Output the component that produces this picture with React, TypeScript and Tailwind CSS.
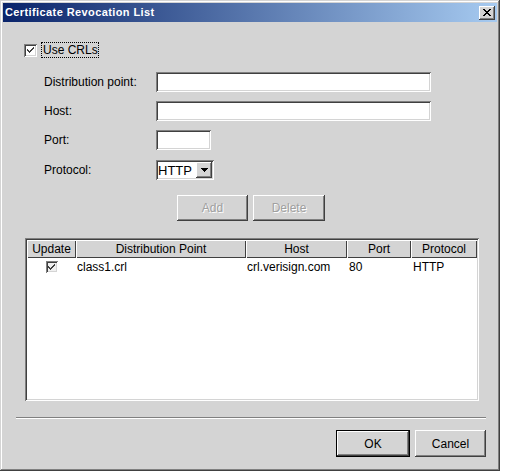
import React from 'react';

const raised = 'shadow-[inset_-1px_-1px_0_#404040,inset_1px_1px_0_#ffffff,inset_-2px_-2px_0_#808080]';
const sunken = 'shadow-[inset_1px_1px_0_#808080,inset_-1px_-1px_0_#ffffff,inset_2px_2px_0_#404040,inset_-2px_-2px_0_#d4d4d4]';

function Check({ size = 13, muted }: { size?: number; muted?: boolean }) {
    return (
        <div
            className={`flex items-center justify-center ${muted ? 'bg-[#f0f0f0]' : 'bg-white'} ${sunken}`}
            style={{ width: size, height: size }}
        >
            <svg width="7" height="7" viewBox="0 0 7 7" shapeRendering="crispEdges">
                <path d="M0 2h1v1H0zM0 3h2v1H0zM1 4h2v1H1zM2 5h1v1H2zM2 4h1v1H2zM3 3h1v2H3zM4 2h1v2H4zM5 1h1v2H5zM6 0h1v2H6z" fill="#404040" />
            </svg>
        </div>
    );
}

function Field({ width, children }: { width: number; children?: React.ReactNode }) {
    return (
        <div className={`h-[20px] bg-white ${sunken} flex items-center`} style={{ width }}>
            {children}
        </div>
    );
}

function Button({ label, disabled, primary, w }: { label: string; disabled?: boolean; primary?: boolean; w: string }) {
    return (
        <div
            className={`${w} flex items-center justify-center ${
                primary
                    ? 'shadow-[inset_0_0_0_1px_#000000,inset_-2px_-2px_0_#404040,inset_2px_2px_0_#ffffff,inset_-3px_-3px_0_#808080]'
                    : raised
            } ${disabled ? 'text-[#a0a0a0] [text-shadow:1px_1px_0_#ffffff]' : 'text-black'}`}
        >
            {label}
        </div>
    );
}

const columns = [
    { name: 'Update', w: 'w-[49px]' },
    { name: 'Distribution Point', w: 'w-[170px]' },
    { name: 'Host', w: 'w-[101px]' },
    { name: 'Port', w: 'w-[64px]' },
    { name: 'Protocol', w: 'w-[66px]' },
];

export default function App() {
    return (
        <div className="w-[514px] h-[474px] bg-white font-['Liberation_Sans',Arial,sans-serif] text-[12px] text-black leading-none">
            <div className="w-[500px] h-[471px] bg-[#d4d4d4] p-[3px] flex flex-col shadow-[inset_-1px_-1px_0_#404040,inset_1px_1px_0_#d4d4d4,inset_-2px_-2px_0_#808080,inset_2px_2px_0_#ffffff]">
                {/* title bar */}
                <div className="h-[19px] flex items-center justify-between pl-[2px] pr-[2px] bg-[linear-gradient(to_right,#0a246a,#a6caf0)]">
                    <span className="text-white font-bold text-[11px] tracking-[0.4px]">Certificate Revocation List</span>
                    <div className={`w-[16px] h-[14px] bg-[#d4d4d4] flex items-center justify-center ${raised}`}>
                        <svg width="8" height="7" viewBox="0 0 8 7" shapeRendering="crispEdges">
                            <path d="M0 0h2v1H0zM6 0h2v1H6zM1 1h2v1H1zM5 1h2v1H5zM2 2h4v1H2zM3 3h2v1H3zM2 4h4v1H2zM1 5h2v1H1zM5 5h2v1H5zM0 6h2v1H0zM6 6h2v1H6z" fill="#000" />
                        </svg>
                    </div>
                </div>

                {/* client */}
                <div className="flex flex-col flex-1">
                    <div className="mt-[20px] pl-[21px] flex items-center gap-[4px]">
                        <Check />
                        <div className="h-[16px] w-[58px] border border-dotted border-black flex items-center pl-[1px]">Use CRLs</div>
                    </div>

                    <div className="mt-[14px] pl-[41px] flex flex-col">
                        <div className="flex items-center">
                            <span className="w-[112px]">Distribution point:</span>
                            <Field width={275} />
                        </div>
                        <div className="flex items-center mt-[9px]">
                            <span className="w-[112px]">Host:</span>
                            <Field width={275} />
                        </div>
                        <div className="flex items-center mt-[9px]">
                            <span className="w-[112px]">Port:</span>
                            <Field width={55} />
                        </div>
                        <div className="flex items-center mt-[10px]">
                            <span className="w-[112px]">Protocol:</span>
                            <Field width={58}>
                                <span className="pl-[2px] flex-1 text-[13px]">HTTP</span>
                                <div className={`w-[16px] h-[16px] mr-[2px] bg-[#d4d4d4] flex items-center justify-center ${raised}`}>
                                    <svg width="7" height="4" viewBox="0 0 7 4" shapeRendering="crispEdges">
                                        <path d="M0 0h7v1H0zM1 1h5v1H1zM2 2h3v1H2zM3 3h1v1H3z" fill="#000" />
                                    </svg>
                                </div>
                            </Field>
                        </div>
                    </div>

                    <div className="mt-[15px] pl-[174px] flex gap-[5px] h-[26px]">
                        <Button label="Add" disabled w="w-[71px]" />
                        <Button label="Delete" disabled w="w-[72px]" />
                    </div>

                    {/* table */}
                    <div className={`mt-[17px] ml-[22px] w-[454px] h-[163px] bg-white p-[2px] ${sunken}`}>
                        <div className="flex h-[18px] bg-[#d4d4d4]">
                            {columns.map((c) => (
                                <div
                                    key={c.name}
                                    className={`${c.w} flex items-center justify-center shadow-[inset_1px_1px_0_#ffffff,inset_-1px_-1px_0_#404040]`}
                                >
                                    {c.name}
                                </div>
                            ))}
                        </div>
                        <div className="flex h-[18px] items-center">
                            <div className="w-[49px] flex justify-center">
                                <Check size={12} muted />
                            </div>
                            <div className="w-[170px] pl-[1px]">class1.crl</div>
                            <div className="w-[101px] pl-[1px]">crl.verisign.com</div>
                            <div className="w-[64px] pl-[2px]">80</div>
                            <div className="w-[66px] pl-[2px]">HTTP</div>
                        </div>
                    </div>

                    <div className="mt-[16px] ml-[13px] w-[470px] h-[2px] border-t border-t-[#808080] border-b border-b-white" />

                    <div className="mt-[11px] flex justify-end pr-[11px] gap-[5px] h-[27px]">
                        <Button label="OK" primary w="w-[74px]" />
                        <Button label="Cancel" w="w-[71px]" />
                    </div>
                </div>
            </div>
        </div>
    );
}
